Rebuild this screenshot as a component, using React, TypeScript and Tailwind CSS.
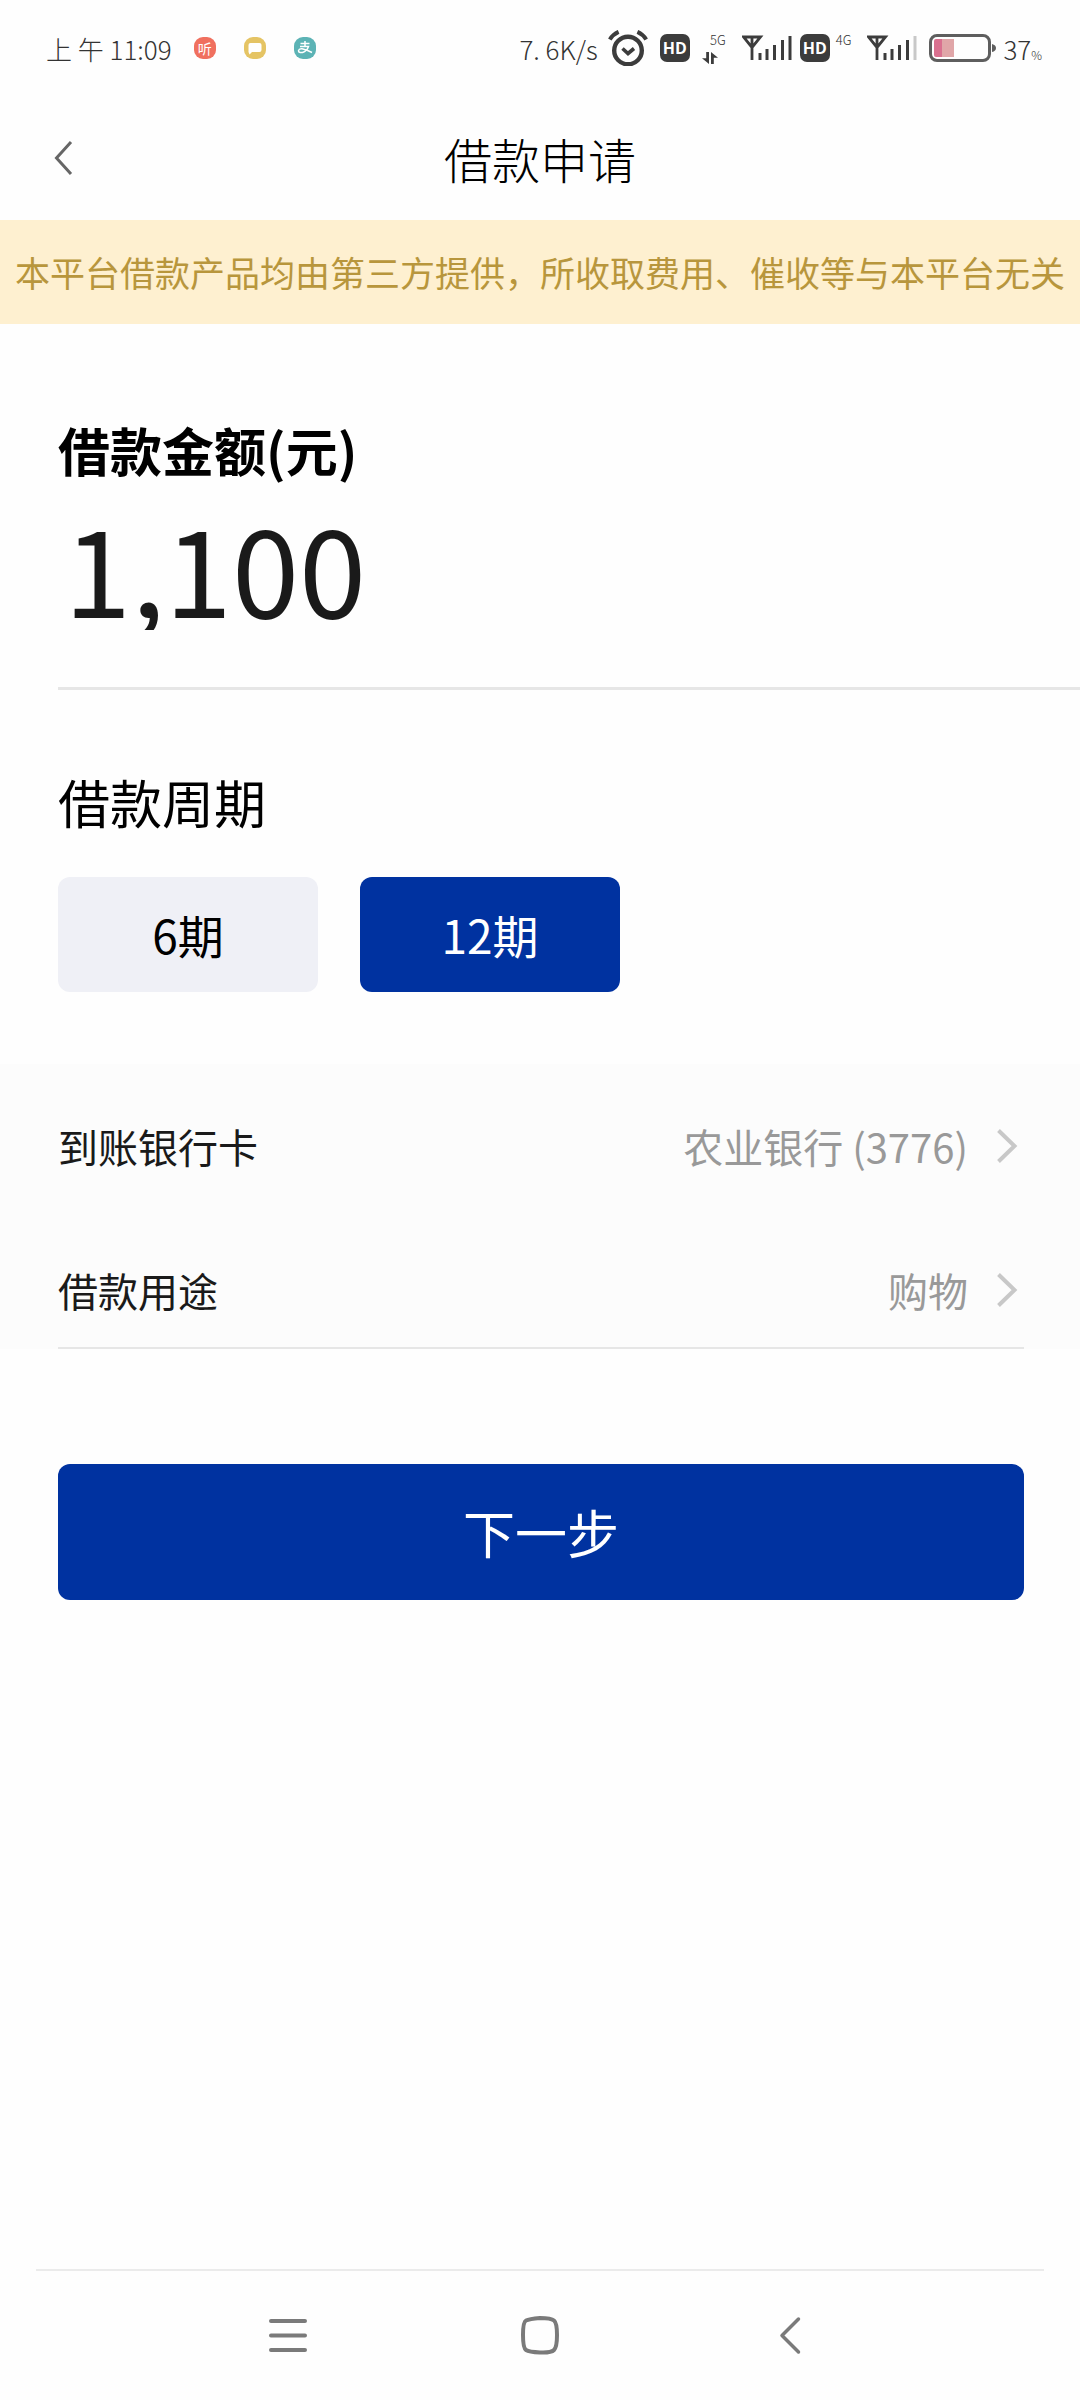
import { useState } from 'react'

const periods = [
  { value: 6, label: '6期' },
  { value: 12, label: '12期' },
]

const details = [
  { label: '到账银行卡', value: '农业银行 (3776)' },
  { label: '借款用途', value: '购物' },
]

function AlarmIcon() {
  return (
    <svg className="h-9 w-10" viewBox="0 0 40 36" fill="none" stroke="#3c3c3c" aria-hidden>
      <circle cx="20" cy="20.500" r="13.800" strokeWidth="4.400" />
      <path d="M1.800 9.500Q5 4.200 10.600 1.800M38.200 9.500Q35 4.200 29.400 1.800" strokeWidth="4" />
      <path d="m14.500 18.500 5.500 5 6-5" strokeWidth="3.600" />
    </svg>
  )
}

function HdBadge() {
  return (
    <span className="flex h-7 w-[30px] items-center justify-center rounded-[7px] bg-[#3c3c3c] font-['Open_Sans',sans-serif] text-base font-bold leading-7 text-white">
      HD
    </span>
  )
}

function DataArrows() {
  return (
    <svg className="h-3 w-4" viewBox="0 0 16 12" fill="#3c3c3c" aria-hidden>
      <path d="M4.200 0H7v12L0 6.200h4.200ZM9 0l7 5.800h-4.200V12H9Z" />
    </svg>
  )
}

function SignalIcon({ lastBar }: { lastBar: string }) {
  return (
    <svg className="h-[26px] w-[50px]" viewBox="0 0 50 26" fill="none" stroke="#3c3c3c" aria-hidden>
      <path d="M1.500 2h17L10 12.500ZM10 2v23" strokeWidth="2.800" />
      <path d="M18 18v7M25 14v11M32.500 10v15M40.500 5v20" strokeWidth="3" />
      <path d="M48 1v24" stroke={lastBar} strokeWidth="3" />
    </svg>
  )
}

function BatteryIcon() {
  return (
    <svg className="h-7 w-[68px]" viewBox="0 0 68 28" fill="none" aria-hidden>
      <rect x="1.500" y="1.500" width="59" height="25" rx="6.500" stroke="#5e5e5e" strokeWidth="3" />
      <path d="M7 5H14V23H7Q5 23 5 21V7Q5 5 7 5Z" fill="#d9708f" />
      <path d="M13 5H25V23H13Z" fill="#e0a6a8" />
      <path d="M63 10Q67 11 67 14T63 18Z" fill="#5e5e5e" />
    </svg>
  )
}

function StatusBar() {
  return (
    <div className="flex h-24 items-center justify-between pl-[46px] pr-[38px] text-[26px] font-light text-[#333333]">
      <div className="flex items-center gap-[22px]">
        <span className="whitespace-nowrap">上 午 11:09</span>
        <div className="flex gap-7">
          <span className="flex size-[22px] items-center justify-center rounded-[9px] bg-[#f0705f] text-sm font-normal leading-[22px] text-white">
            听
          </span>
          <svg className="size-[22px]" viewBox="0 0 22 22" aria-hidden>
            <rect width="22" height="22" rx="9" fill="#e5c464" />
            <path d="M6.500 6h9q2 0 2 2v5q0 2-2 2H8l-2.500 2.500L4.500 15V8q0-2 2-2Z" fill="#fff" />
          </svg>
          <svg className="size-[22px]" viewBox="0 0 22 22" aria-hidden>
            <rect width="22" height="22" rx="9" fill="#5cb3b5" />
            <path
              d="M6.500 6.500h9M11 4v5.500M6 9.500h8.500Q13 14 8.500 15.500 4.500 16 4.500 13.700 5 11.500 8 11.800 12 12.500 18 15.500"
              fill="none"
              stroke="#fff"
              strokeWidth="1.500"
            />
          </svg>
        </div>
      </div>

      <div className="flex items-center">
        <span className="whitespace-nowrap">7. 6K/s</span>
        <span className="ml-2.5"><AlarmIcon /></span>
        <span className="ml-3"><HdBadge /></span>
        <span className="ml-3 flex w-6 flex-col gap-1">
          <span className="self-end text-[13px] leading-4">5G</span>
          <DataArrows />
        </span>
        <span className="ml-4"><SignalIcon lastBar="#3c3c3c" /></span>
        <span className="ml-2"><HdBadge /></span>
        <span className="ml-1.5 flex h-8 items-start text-[13px] leading-4">4G</span>
        <span className="ml-4"><SignalIcon lastBar="#c8c8c8" /></span>
        <span className="ml-3"><BatteryIcon /></span>
        <span className="ml-1.5">37<span className="text-xs">%</span></span>
      </div>
    </div>
  )
}

function NavBar() {
  return (
    <nav className="mx-9 mt-auto flex h-[131px] items-center justify-center gap-[204px] border-t-2 border-[#ebebeb] text-[#7a7a7a]">
      <button type="button" aria-label="最近任务" className="flex w-12 justify-center">
        <svg className="size-10" viewBox="0 0 40 40" fill="none" stroke="currentColor" strokeWidth="4" strokeLinecap="round">
          <path d="M3 5h34M3 19.500h34M3 34h34" />
        </svg>
      </button>
      <button type="button" aria-label="主屏幕" className="flex w-12 justify-center">
        <svg className="size-10" viewBox="0 0 40 40" fill="none" stroke="currentColor" strokeWidth="4">
          <path d="M20 2Q31 2 34 4.500T37 19 34 34 20 36.500 6 34 3 19 6 4.500 20 2Z" />
        </svg>
      </button>
      <button type="button" aria-label="返回" className="flex w-12 justify-center">
        <svg className="size-10" viewBox="0 0 40 40" fill="none" stroke="currentColor" strokeWidth="3.500" strokeLinecap="round" strokeLinejoin="round">
          <path d="M26.500 3 10 19.500 26.500 36" />
        </svg>
      </button>
    </nav>
  )
}

export default function App() {
  const [amount, setAmount] = useState('1,100')
  const [period, setPeriod] = useState(12)

  return (
    <div className="flex min-h-screen flex-col bg-[#fefefe] font-['Noto_Sans_CJK_SC',sans-serif] text-black">
      <StatusBar />

      <header className="grid h-[124px] grid-cols-[1fr_auto_1fr] items-center px-12">
        <button type="button" aria-label="返回" className="w-8">
          <svg className="h-9 w-8" viewBox="0 0 32 36" fill="none" stroke="#666" strokeWidth="3">
            <path d="M23 2 8.500 18 23 34" />
          </svg>
        </button>
        <h1 className="text-[48px] font-light leading-[72px]">借款申请</h1>
      </header>

      <p className="bg-[#fef0d0] text-center text-[35px] leading-[104px] whitespace-nowrap text-[#b8963c]">
        本平台借款产品均由第三方提供，所收取费用、催收等与本平台无关
      </p>

      <main>
        <section className="pl-[58px] pt-[90px]">
          <label htmlFor="amount" className="block text-[52px] font-bold leading-[72px]">
            借款金额(元)
          </label>
          <div className="border-b-3 border-[#e6e6e6] pb-[57px] pt-4">
            <input
              id="amount"
              inputMode="numeric"
              value={amount}
              onChange={(e) => setAmount(e.target.value)}
              className="block h-32 w-full overflow-hidden pl-1.5 text-[121px] leading-[128px] text-[#1a1a1a] outline-none"
            />
          </div>
        </section>

        <section className="pb-[72px] pl-[58px] pr-14 pt-[76px]">
          <h2 className="text-[52px] leading-[72px]">借款周期</h2>
          <div className="mt-[39px] flex gap-[42px]">
            {periods.map((p) => (
              <button
                key={p.value}
                type="button"
                aria-pressed={period === p.value}
                onClick={() => setPeriod(p.value)}
                className={`h-[115px] w-[260px] rounded-xl text-[46px] ${
                  period === p.value ? 'bg-[#0032a0] text-white' : 'bg-[#eff0f6] text-black'
                }`}
              >
                {p.label}
              </button>
            ))}
          </div>
        </section>

        <section className="bg-[#fcfcfc] pl-[58px] pr-14 pt-[52px]">
          <div className="flex flex-col gap-[84px] border-b-2 border-[#e6e6e6] pb-[27px]">
            {details.map((item) => (
              <button key={item.label} type="button" className="flex items-center text-left text-[40px] leading-[60px]">
                <span className="flex-1 text-[#1a1a1a]">{item.label}</span>
                <span className="text-[#999999]">{item.value}</span>
                <svg className="ml-7 h-9 w-7" viewBox="0 0 28 36" fill="none" stroke="#c8c8c8" strokeWidth="4" aria-hidden>
                  <path d="M2.500 2.500 18.500 18 2.500 33.500" />
                </svg>
              </button>
            ))}
          </div>
        </section>

        <div className="pl-[58px] pr-14 pt-[115px]">
          <button type="button" className="h-[136px] w-full rounded-xl bg-[#0032a0] text-[52px] text-white">
            下一步
          </button>
        </div>
      </main>

      <NavBar />
    </div>
  )
}
